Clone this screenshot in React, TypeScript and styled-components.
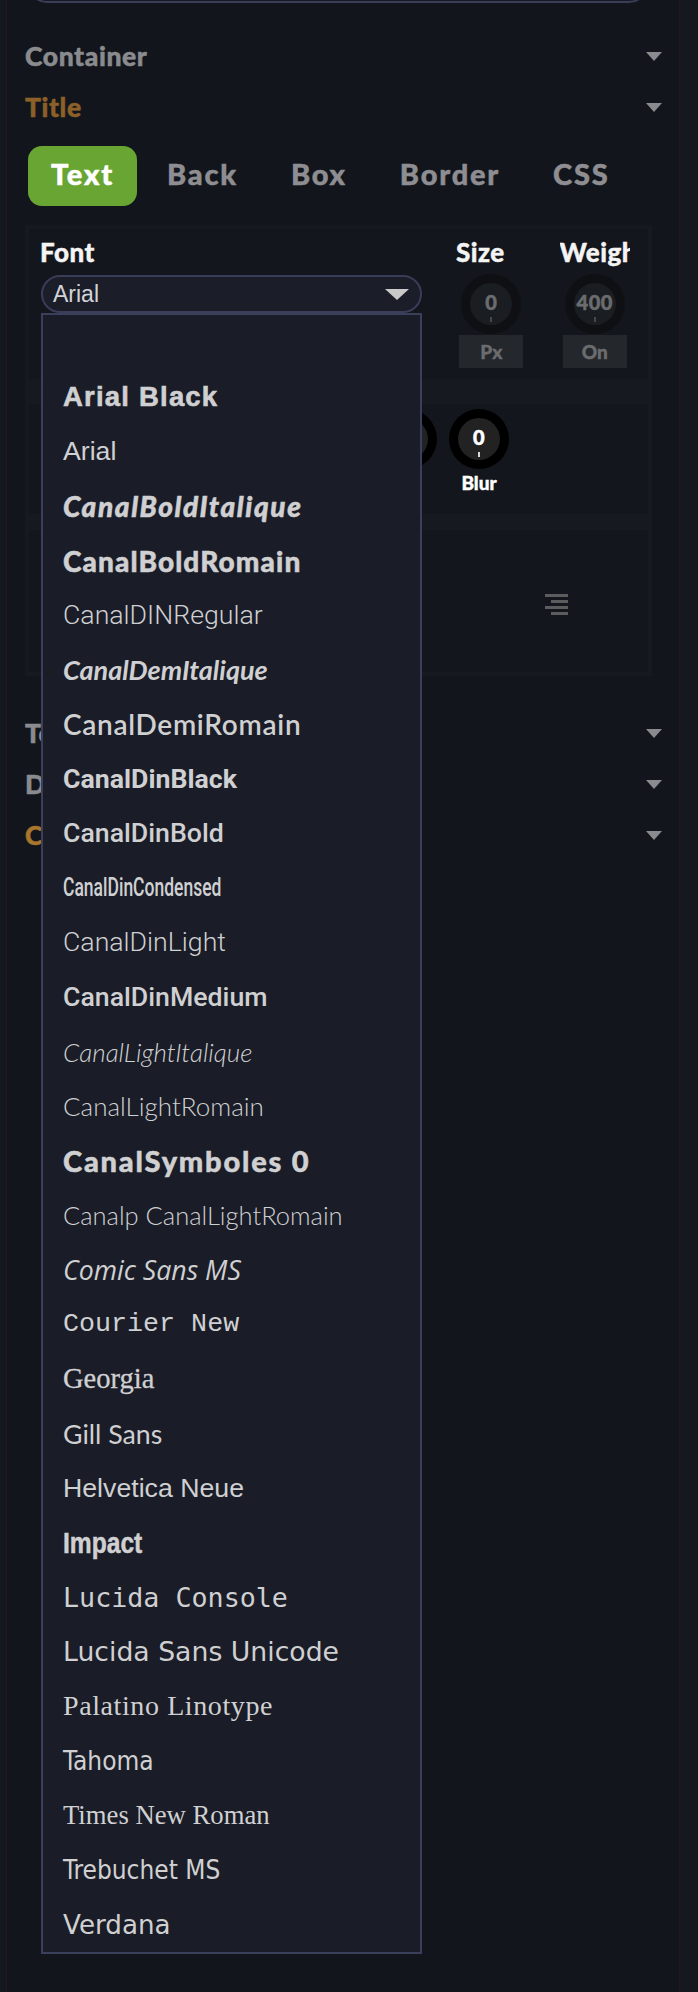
import React from "react";
import styled, { createGlobalStyle } from "styled-components";

const HEAVY = `"Lato", "Noto Sans", sans-serif`;
const LATO = `"Lato", "Noto Sans", sans-serif`;
const ROBOTO = `"Roboto", "Noto Sans", sans-serif`;
const LIB_SANS = `"Liberation Sans", Arial, sans-serif`;
const CONDENSED = `"DejaVu Sans Condensed", "DejaVu Sans", sans-serif`;

const GlobalStyle = createGlobalStyle`
  html, body {
    margin: 0;
    padding: 0;
    background: #15181f;
  }
  * {
    box-sizing: border-box;
  }
`;

//options of the open font list
interface IFontOption {
  name: string;
  family: string;
  size?: number;
  weight?: number;
  italic?: boolean;
  spacing?: number;
  squeeze?: number;
  stretch?: string;
  stroke?: number;
}

const fontOptions: IFontOption[] = [
  { name: "", family: LIB_SANS },
  { name: "Arial Black", family: LIB_SANS, size: 27.5, weight: 700, spacing: 1.2, stroke: 0.6 },
  { name: "Arial", family: LIB_SANS },
  { name: "CanalBoldItalique", family: LATO, size: 28, weight: 900, italic: true, spacing: 1.6, stroke: 0.5 },
  { name: "CanalBoldRomain", family: LATO, size: 28, weight: 900, spacing: 1.1, stroke: 0.5 },
  { name: "CanalDINRegular", family: ROBOTO, weight: 300 },
  { name: "CanalDemItalique", family: LATO, size: 27, weight: 700, italic: true },
  { name: "CanalDemiRomain", family: LATO, size: 28, weight: 600, spacing: 0.7 },
  { name: "CanalDinBlack", family: ROBOTO, weight: 700 },
  { name: "CanalDinBold", family: ROBOTO, weight: 500 },
  { name: "CanalDinCondensed", family: ROBOTO, size: 25, weight: 500, squeeze: 0.7 },
  { name: "CanalDinLight", family: ROBOTO, weight: 300 },
  { name: "CanalDinMedium", family: ROBOTO, weight: 500 },
  { name: "CanalLightItalique", family: LATO, size: 26, weight: 300, italic: true },
  { name: "CanalLightRomain", family: LATO, size: 26, weight: 300 },
  { name: "CanalSymboles 0", family: LATO, size: 29, weight: 900, spacing: 1.8, stroke: 0.5 },
  { name: "Canalp CanalLightRomain", family: LATO, size: 25.5, weight: 300 },
  { name: "Comic Sans MS", family: `"Open Sans", sans-serif`, italic: true },
  { name: "Courier New", family: `"Liberation Mono", monospace` },
  { name: "Georgia", family: `"Liberation Serif", serif`, size: 28.5, stroke: 0.3 },
  { name: "Gill Sans", family: LATO },
  { name: "Helvetica Neue", family: LIB_SANS },
  { name: "Impact", family: LIB_SANS, size: 30, weight: 700, squeeze: 0.82, stroke: 0.5 },
  { name: "Lucida Console", family: `"DejaVu Sans Mono", monospace` },
  { name: "Lucida Sans Unicode", family: `"DejaVu Sans", sans-serif` },
  { name: "Palatino Linotype", family: `"Liberation Serif", serif`, size: 28, spacing: 0.6 },
  { name: "Tahoma", family: CONDENSED, size: 26, stretch: "condensed" },
  { name: "Times New Roman", family: `"Liberation Serif", serif` },
  { name: "Trebuchet MS", family: CONDENSED, size: 26, stretch: "condensed" },
  { name: "Verdana", family: `"DejaVu Sans", sans-serif`, size: 26.2 },
];

const tabs = ["Text", "Back", "Box", "Border", "CSS"];
const shadowKnobs = ["Size", "Alpha", "X", "Y", "Blur"];

const Caret = ({ color = "#8a8b8f", w = 16, h = 9 }) => (
  <svg width={w} height={h} viewBox={`0 0 ${w} ${h}`}>
    <polygon points={`0,0 ${w},0 ${w / 2},${h}`} fill={color} />
  </svg>
);

const AlignIcon = ({ mode }: { mode: "left" | "center" | "right" }) => {
  const short = 17;
  const long = 23;
  const x =
    mode === "left" ? 0 : mode === "center" ? (long - short) / 2 : long - short;
  return (
    <svg width={long} height={21} viewBox={`0 0 ${long} 21`}>
      <rect x={0} y={0} width={long} height={3} fill="#5b5c5e" />
      <rect x={x} y={6} width={short} height={3} fill="#5b5c5e" />
      <rect x={0} y={12} width={long} height={3} fill="#5b5c5e" />
      <rect x={x} y={18} width={short} height={3} fill="#5b5c5e" />
    </svg>
  );
};

const App: React.FC = () => {
  return (
    <>
      <GlobalStyle />
      <Frame>
        <SearchInput />

        <HeadGroup $top={27.5}>
          <SectionHead $color="#8a8b8f">
            Container
            <Caret />
          </SectionHead>
          <SectionHead $color="#8c6029">
            Title
            <Caret />
          </SectionHead>
        </HeadGroup>

        <TabBar>
          {tabs.map((tab, index) => (
            <Tab key={tab} $active={index === 0}>
              {tab}
            </Tab>
          ))}
        </TabBar>

        <TabBody>
          <FontPanel>
            <FontCol>
              <FieldLabel>Font</FieldLabel>
              <SelectWrap>
                <SelectBox>
                  Arial
                  <Caret color="#c9c9c9" w={24} h={11} />
                </SelectBox>
                <OptionList>
                  {fontOptions.map((opt, index) => (
                    <Option
                      key={index}
                      $family={opt.family}
                      $size={opt.size ?? 26.7}
                      $weight={opt.weight ?? 400}
                      $italic={!!opt.italic}
                      $spacing={opt.spacing ?? 0}
                      $stretch={opt.stretch ?? "normal"}
                      $stroke={opt.stroke ?? 0}
                    >
                      {opt.squeeze ? (
                        <Squeeze $x={opt.squeeze}>{opt.name}</Squeeze>
                      ) : (
                        opt.name
                      )}
                    </Option>
                  ))}
                </OptionList>
              </SelectWrap>
            </FontCol>

            <KnobCol>
              <FieldLabel>Size</FieldLabel>
              <KnobDial $dim>
                <KnobFace $dim>0</KnobFace>
              </KnobDial>
              <UnitBox>Px</UnitBox>
            </KnobCol>
            <KnobCol>
              <FieldLabel>Weight</FieldLabel>
              <KnobDial $dim>
                <KnobFace $dim>400</KnobFace>
              </KnobDial>
              <UnitBox>On</UnitBox>
            </KnobCol>
          </FontPanel>

          <ShadowPanel>
            {shadowKnobs.map((label) => (
              <ShadowKnob key={label}>
                <KnobDial>
                  <KnobFace>0</KnobFace>
                </KnobDial>
                <KnobLabel>{label}</KnobLabel>
              </ShadowKnob>
            ))}
          </ShadowPanel>

          <AlignPanel>
            <AlignIcon mode="left" />
            <AlignIcon mode="center" />
            <AlignIcon mode="right" />
          </AlignPanel>
        </TabBody>

        <HeadGroup $top={31.5}>
          <SectionHead $color="#8a8b8f">
            Text
            <Caret />
          </SectionHead>
          <SectionHead $color="#8a8b8f">
            Description
            <Caret />
          </SectionHead>
          <SectionHead $color="#a9762d">
            Cta Button
            <Caret />
          </SectionHead>
        </HeadGroup>
      </Frame>
    </>
  );
};

export default App;

const Frame = styled.div`
  display: flow-root;
  margin-left: 6px;
  width: 674px;
  min-height: 1992px;
  padding: 0 17px 0 18px;
  background: #12151b;
  border-left: 1px solid #2a1517;
  border-right: 1px solid #2a1517;
`;

const SearchInput = styled.div`
  height: 40px;
  margin: -37px 13px 0 2px;
  border: 2px solid #393d58;
  border-radius: 20px;
  background: #171a24;
`;

const HeadGroup = styled.div<{ $top: number }>`
  margin-top: ${(p) => p.$top}px;
`;

const SectionHead = styled.div<{ $color: string }>`
  display: flex;
  align-items: center;
  justify-content: space-between;
  height: 51px;
  font-family: ${HEAVY};
  font-weight: 900;
  font-size: 26.5px;
  letter-spacing: 0.6px;
  -webkit-text-stroke: 0.5px currentColor;
  color: ${(p) => p.$color};
`;

const TabBar = styled.div`
  display: flex;
  gap: 7px;
  margin: 13.5px 0 0 3px;
`;

const Tab = styled.div<{ $active: boolean }>`
  height: 60px;
  padding: 0 23px 5px;
  display: flex;
  align-items: center;
  border-radius: 14px;
  background: ${(p) => (p.$active ? "#69a533" : "transparent")};
  color: ${(p) => (p.$active ? "#ffffff" : "#8e8e92")};
  font-family: ${HEAVY};
  font-weight: 900;
  font-size: 29px;
  letter-spacing: 1.8px;
  -webkit-text-stroke: 0.5px currentColor;
`;

const TabBody = styled.div`
  display: flex;
  flex-direction: column;
  margin: 19px 10px 0 0;
  padding: 4px;
  background: #161a20;
`;

const PanelBase = styled.div`
  background: #13161c;
`;

const FontPanel = styled(PanelBase)`
  height: 150px;
  display: flex;
  gap: 33px;
  padding: 6px 18px 0 11px;
`;

const FontCol = styled.div`
  width: 382px;
  display: flex;
  flex-direction: column;
  margin-right: 1px;
`;

const FieldLabel = styled.div`
  height: 34px;
  line-height: 34px;
  font-family: ${HEAVY};
  font-weight: 900;
  font-size: 26px;
  letter-spacing: 0.5px;
  -webkit-text-stroke: 0.4px currentColor;
  color: #f4f4f4;
  white-space: nowrap;
  align-self: flex-start;
`;

const SelectWrap = styled.div`
  position: relative;
  margin: 6px 0 0 1px;
  width: 381px;
`;

const SelectBox = styled.div`
  height: 38px;
  display: flex;
  align-items: center;
  justify-content: space-between;
  padding: 0 11px 0 10px;
  border: 2px solid #393d58;
  border-radius: 19px;
  background: #1b1e29;
  font-family: ${LIB_SANS};
  font-size: 23px;
  color: #d2d3d8;
`;

const OptionList = styled.div`
  position: absolute;
  z-index: 20;
  top: 100%;
  left: 0;
  width: 381px;
  border: 2px solid #3a3f5c;
  background: #1a1d27;
`;

const Option = styled.div<{
  $family: string;
  $size: number;
  $weight: number;
  $italic: boolean;
  $spacing: number;
  $stretch: string;
  $stroke: number;
}>`
  height: 54.57px;
  display: flex;
  align-items: center;
  padding-left: 20px;
  white-space: nowrap;
  color: #d0d0d2;
  font-family: ${(p) => p.$family};
  font-size: ${(p) => p.$size}px;
  font-weight: ${(p) => p.$weight};
  font-style: ${(p) => (p.$italic ? "italic" : "normal")};
  font-stretch: ${(p) => p.$stretch};
  letter-spacing: ${(p) => p.$spacing}px;
  -webkit-text-stroke: ${(p) => p.$stroke}px currentColor;
`;

const Squeeze = styled.span<{ $x: number }>`
  display: inline-block;
  transform: scaleX(${(p) => p.$x});
  transform-origin: left center;
`;

const KnobCol = styled.div`
  width: 71px;
  display: flex;
  flex-direction: column;
  align-items: center;
  overflow: hidden;
`;

const KnobDial = styled.div<{ $dim?: boolean }>`
  width: 60px;
  height: 60px;
  flex-shrink: 0;
  border-radius: 50%;
  display: flex;
  align-items: center;
  justify-content: center;
  background: ${(p) => (p.$dim ? "#0e1014" : "#000000")};
  margin-top: ${(p) => (p.$dim ? "5px" : "0")};
`;

const KnobFace = styled.div<{ $dim?: boolean }>`
  position: relative;
  width: 42px;
  height: 42px;
  border-radius: 50%;
  display: flex;
  align-items: center;
  justify-content: center;
  padding-bottom: 4px;
  background: ${(p) => (p.$dim ? "#1a1d21" : "#222222")};
  color: ${(p) => (p.$dim ? "#6b6c6e" : "#ffffff")};
  font-family: ${HEAVY};
  font-weight: 900;
  font-size: 20px;
  letter-spacing: 0.5px;
  -webkit-text-stroke: 0.5px currentColor;

  &::after {
    content: "";
    position: absolute;
    left: 50%;
    bottom: 3px;
    width: 2px;
    height: 5px;
    margin-left: -1px;
    background: ${(p) => (p.$dim ? "#45474b" : "#d8d8d8")};
  }
`;

const UnitBox = styled.div`
  width: 64px;
  height: 33px;
  margin-top: 1px;
  display: flex;
  align-items: center;
  justify-content: center;
  background: #24272c;
  color: #6b6c6e;
  font-family: ${HEAVY};
  font-weight: 900;
  font-size: 19px;
  -webkit-text-stroke: 0.4px currentColor;
`;

const ShadowPanel = styled(PanelBase)`
  height: 110px;
  margin-top: 25px;
  display: flex;
  justify-content: center;
  padding: 5px 7px 0 0;
`;

const ShadowKnob = styled.div`
  width: 72px;
  display: flex;
  flex-direction: column;
  align-items: center;
`;

const KnobLabel = styled.div`
  margin-top: 3px;
  line-height: 22px;
  font-family: ${HEAVY};
  font-weight: 900;
  font-size: 19px;
  -webkit-text-stroke: 0.4px currentColor;
  color: #ffffff;
`;

const AlignPanel = styled(PanelBase)`
  height: 142px;
  margin-top: 16px;
  display: flex;
  align-items: center;
  justify-content: space-between;
  padding: 6px 80px 0;
`;
